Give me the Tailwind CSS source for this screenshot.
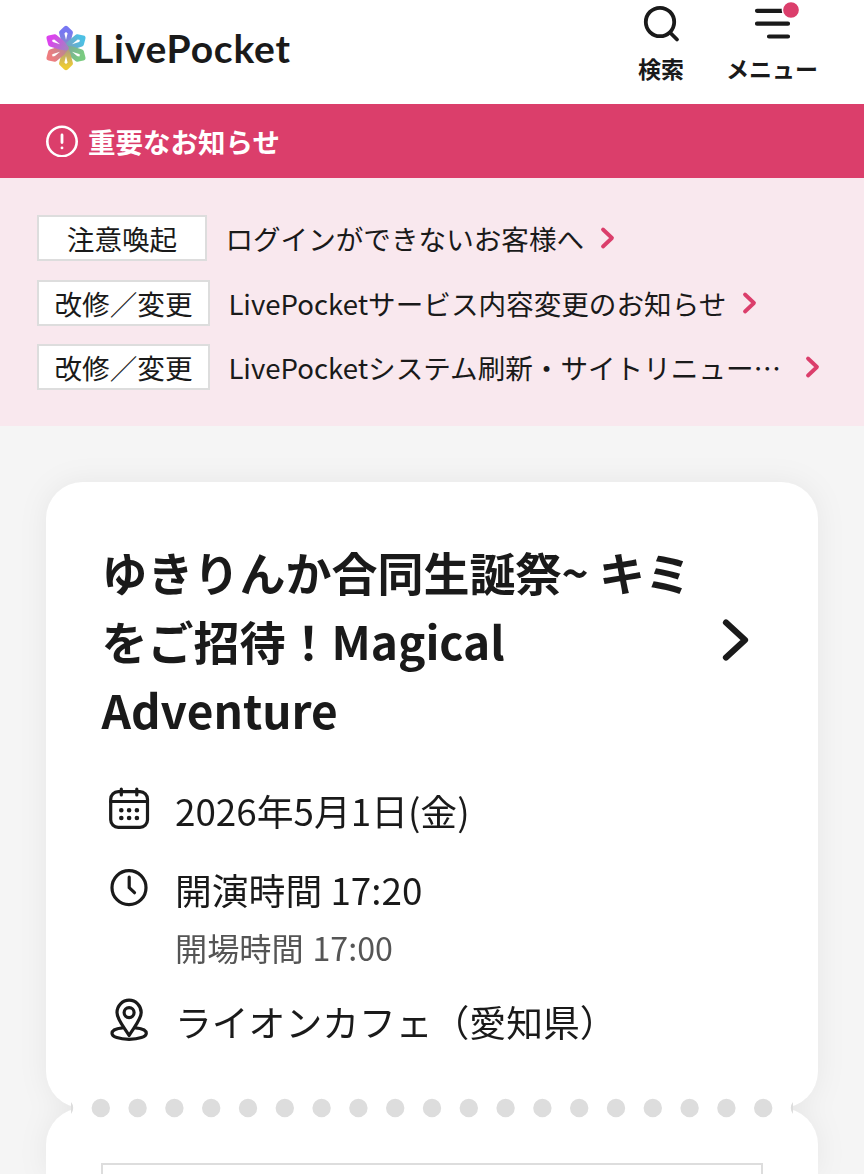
<!DOCTYPE html>
<html lang="ja">
  <head>
    <meta charset="utf-8" />
    <title>LivePocket</title>
    <script src="https://cdn.jsdelivr.net/npm/@tailwindcss/browser@4"></script>
  </head>
  <body class="h-[1174px] overflow-hidden bg-[#f5f5f5] font-['Noto_Sans_CJK_JP',sans-serif] text-[#1a1a1a]">
    <!-- Header -->
    <header class="flex h-[104px] justify-between bg-white pl-[45px] pr-[46px]">
      <a class="flex items-center pb-2">
        <svg class="h-[46px] w-[42px]" viewBox="0 0 42 46">
          <defs>
            <linearGradient id="p1" gradientUnits="userSpaceOnUse" x1="21" y1="0" x2="21" y2="23"><stop offset=".3" stop-color="#7777f2" /><stop offset="1" stop-color="#8b91c0" /></linearGradient>
            <linearGradient id="p2" gradientUnits="userSpaceOnUse" x1="40" y1="12" x2="21" y2="23"><stop offset=".2" stop-color="#4dc0e4" /><stop offset="1" stop-color="#7f9cba" /></linearGradient>
            <linearGradient id="p3" gradientUnits="userSpaceOnUse" x1="40" y1="34" x2="21" y2="23"><stop offset=".2" stop-color="#7acb80" /><stop offset="1" stop-color="#7da89d" /></linearGradient>
            <linearGradient id="p4" gradientUnits="userSpaceOnUse" x1="21" y1="46" x2="21" y2="23"><stop offset=".2" stop-color="#ecca35" /><stop offset="1" stop-color="#a79a86" /></linearGradient>
            <linearGradient id="p5" gradientUnits="userSpaceOnUse" x1="2" y1="34" x2="21" y2="23"><stop offset=".2" stop-color="#ee7d80" /><stop offset="1" stop-color="#b58793" /></linearGradient>
            <linearGradient id="p6" gradientUnits="userSpaceOnUse" x1="2" y1="12" x2="21" y2="23"><stop offset=".2" stop-color="#dc43ee" /><stop offset="1" stop-color="#a77fc4" /></linearGradient>
          </defs>
          <g fill="none" stroke-width="5" stroke-linejoin="round">
            <path stroke="url(#p1)" d="M21 22 L19 17 L16.6 7.6 L21 3.4 L25.4 7.6 L23 17 Z" />
            <path stroke="url(#p2)" d="M21 23 L24.8 17.8 L32 11.8 L38 13 L36.4 19 L27 22 Z" />
            <path stroke="url(#p3)" d="M21 23 L27 24 L36.4 27 L38 33 L32 34.2 L24.8 28.2 Z" />
            <path stroke="url(#p4)" d="M21 24 L23 29 L25.4 38.4 L21 42.6 L16.6 38.4 L19 29 Z" />
            <path stroke="url(#p5)" d="M21 23 L17.2 28.2 L10 34.2 L4 33 L5.6 27 L15 24 Z" />
            <path stroke="url(#p6)" d="M21 23 L15 22 L5.6 19 L4 13 L10 11.8 L17.2 17.8 Z" />
          </g>
        </svg>
        <svg class="h-[56px] w-[216px]" viewBox="0 0 216 56">
          <text x="6" y="42.8" textLength="197" class="fill-[#1a1a1a] font-['Lato',sans-serif] text-[39px] font-bold">LivePocket</text>
        </svg>
      </a>
      <nav class="flex gap-[42px] text-[23px] leading-[32px] font-bold">
        <a class="flex flex-col items-center">
          <svg class="h-[52px] w-[46px]" viewBox="0 0 46 52" fill="none" stroke="#1a1a1a" stroke-width="3.8" stroke-linecap="round">
            <circle cx="22" cy="22" r="14.2" />
            <path d="M32.5 33 L39 39.5" />
          </svg>
          検索
        </a>
        <a class="flex flex-col items-center">
          <svg class="h-[52px] w-[92px]" viewBox="0 0 92 52" fill="none" stroke="#1a1a1a" stroke-width="4.2" stroke-linecap="round">
            <path d="M31 10.8 H60 M31 23.7 H62 M43 36.5 H62" />
            <circle cx="65" cy="10" r="8.6" fill="#db3e6b" stroke="#fff" stroke-width="1.5" />
          </svg>
          メニュー
        </a>
      </nav>
    </header>

    <!-- Important notices -->
    <div class="flex h-[74px] items-center gap-[10px] bg-[#db3e6b] pl-[46px] text-[27.5px] font-bold text-white">
      <svg class="h-8 w-8" viewBox="0 0 32 32" fill="none" stroke="#fff" stroke-linecap="round">
        <circle cx="16" cy="16.5" r="14.7" stroke-width="2.6" />
        <path stroke-width="2.8" d="M16 10 V17.5 M16 22.8 V22.9" />
      </svg>
      <h2 class="pt-px">重要なお知らせ</h2>
    </div>
    <ul class="flex h-[248px] flex-col gap-[18.4px] bg-[#f9e8ee] pt-[37.3px] pl-[37px] text-[27.6px] leading-[46px]">
      <li class="flex h-[46px] items-center">
        <span class="flex h-[46px] w-[170px] items-center justify-center border-2 border-[#dddddd] bg-white">注意喚起</span>
        <span class="ml-[18.4px]">ログインができないお客様へ</span>
        <svg class="ml-[16px] h-6 w-4" viewBox="0 0 16 24" fill="none" stroke="#db3e6b" stroke-width="3.8" stroke-linecap="round" stroke-linejoin="round"><path d="M3 3.5 L12 12 L3 20.5" /></svg>
      </li>
      <li class="flex h-[46px] items-center">
        <span class="flex h-[46px] w-[173px] items-center justify-center border-2 border-[#dddddd] bg-white">改修／変更</span>
        <span class="ml-[18.4px]">LivePocketサービス内容変更のお知らせ</span>
        <svg class="ml-[16px] h-6 w-4" viewBox="0 0 16 24" fill="none" stroke="#db3e6b" stroke-width="3.8" stroke-linecap="round" stroke-linejoin="round"><path d="M3 3.5 L12 12 L3 20.5" /></svg>
      </li>
      <li class="flex h-[46px] items-center">
        <span class="flex h-[46px] w-[173px] items-center justify-center border-2 border-[#dddddd] bg-white">改修／変更</span>
        <span class="ml-[18.4px] w-[561px] whitespace-nowrap">LivePocketシステム刷新・サイトリニュー…</span>
        <svg class="ml-[16px] h-6 w-4" viewBox="0 0 16 24" fill="none" stroke="#db3e6b" stroke-width="3.8" stroke-linecap="round" stroke-linejoin="round"><path d="M3 3.5 L12 12 L3 20.5" /></svg>
      </li>
    </ul>

    <!-- Ticket -->
    <main class="h-[748px] overflow-hidden px-[46px] pt-[55.5px]">
      <div class="drop-shadow-[0_0_14px_rgba(0,0,0,0.06)]">
        <section class="h-[626.5px] rounded-[37px] bg-white px-[55px] pt-[55.5px]">
          <div class="flex items-center justify-between">
            <h1 class="pl-[0.5px] text-[46px] leading-[69px] font-bold whitespace-nowrap">ゆきりんか合同生誕祭~ キミ<br />をご招待！Magical<br />Adventure</h1>
            <svg class="mr-[12px] mb-[1px] h-[44px] w-[30px]" viewBox="0 0 30 44" fill="none" stroke="#1a1a1a" stroke-width="6.2" stroke-linecap="round" stroke-linejoin="round"><path d="M5 4.5 L24 22 L5 39.5" /></svg>
          </div>
          <dl class="mt-[38.5px] text-[36.8px] leading-[55px]">
            <div class="flex gap-[18px]">
              <dt class="flex w-[56px] justify-center">
                <svg class="mt-px h-[50px] w-[46px]" viewBox="0 0 46 50" fill="none" stroke="#1a1a1a" stroke-width="3.2" stroke-linecap="round">
                  <rect x="4.7" y="7.7" width="36.8" height="35.6" rx="7.5" />
                  <path d="M4.7 17.5 H41.5 M15.3 5 V11 M30.8 5 V11" />
                  <path stroke-width="4.6" d="M15.3 26.2 h.01 M23.1 26.2 h.01 M30.9 26.2 h.01 M15.3 34 h.01 M23.1 34 h.01 M30.9 34 h.01" />
                </svg>
              </dt>
              <dd>2026年5月1日(金)</dd>
            </div>
            <div class="mt-[24px] flex gap-[18px]">
              <dt class="flex w-[56px] justify-center">
                <svg class="mt-px h-[50px] w-[46px]" viewBox="0 0 46 50" fill="none" stroke="#1a1a1a" stroke-width="3.2" stroke-linecap="round" stroke-linejoin="round">
                  <circle cx="23" cy="24.7" r="17" />
                  <path d="M23.2 14.2 V24.7 L28.5 29.7" />
                </svg>
              </dt>
              <dd>
                開演時間 17:20
                <p class="mt-[6px] text-[32.2px] leading-[48px] [word-spacing:1.5px] text-[#555555]">開場時間 17:00</p>
              </dd>
            </div>
            <div class="mt-[23px] flex gap-[18px]">
              <dt class="flex w-[56px] justify-center">
                <svg class="mt-px h-[50px] w-[46px]" viewBox="0 0 46 50" fill="none" stroke="#1a1a1a" stroke-width="3.2" stroke-linecap="round" stroke-linejoin="round">
                  <path d="M23.1 40.5 C18 32 11 24.5 11 17.5 A12.1 12.3 0 0 1 35.2 17.5 C35.2 24.5 28 32 23.1 40.5 Z" />
                  <circle cx="23.1" cy="17.6" r="5" />
                  <path d="M16.5 32.8 C9.5 33.5 6 35.5 6 38.2 C6 41.8 13 44.3 23.1 44.3 C33 44.3 40.3 41.8 40.3 38.2 C40.3 35.5 36.5 33.5 29.7 32.8" />
                </svg>
              </dt>
              <dd>ライオンカフェ（愛知県）</dd>
            </div>
          </dl>
        </section>

        <section class="relative h-[66px] rounded-t-[37px] bg-white px-[55px] pt-[55px]">
          <!-- perforation between the two halves -->
          <svg class="absolute -top-[10px] left-[25px] h-[20px] w-[722px] bg-white" viewBox="0 0 722 20">
            <path d="M-7 10 H740" stroke="#dddddd" stroke-width="18.4" stroke-linecap="round" stroke-dasharray="0 36.8" />
          </svg>
          <div class="h-[11px] border-2 border-b-0 border-[#dddddd]"></div>
        </section>
      </div>
    </main>
  </body>
</html>
